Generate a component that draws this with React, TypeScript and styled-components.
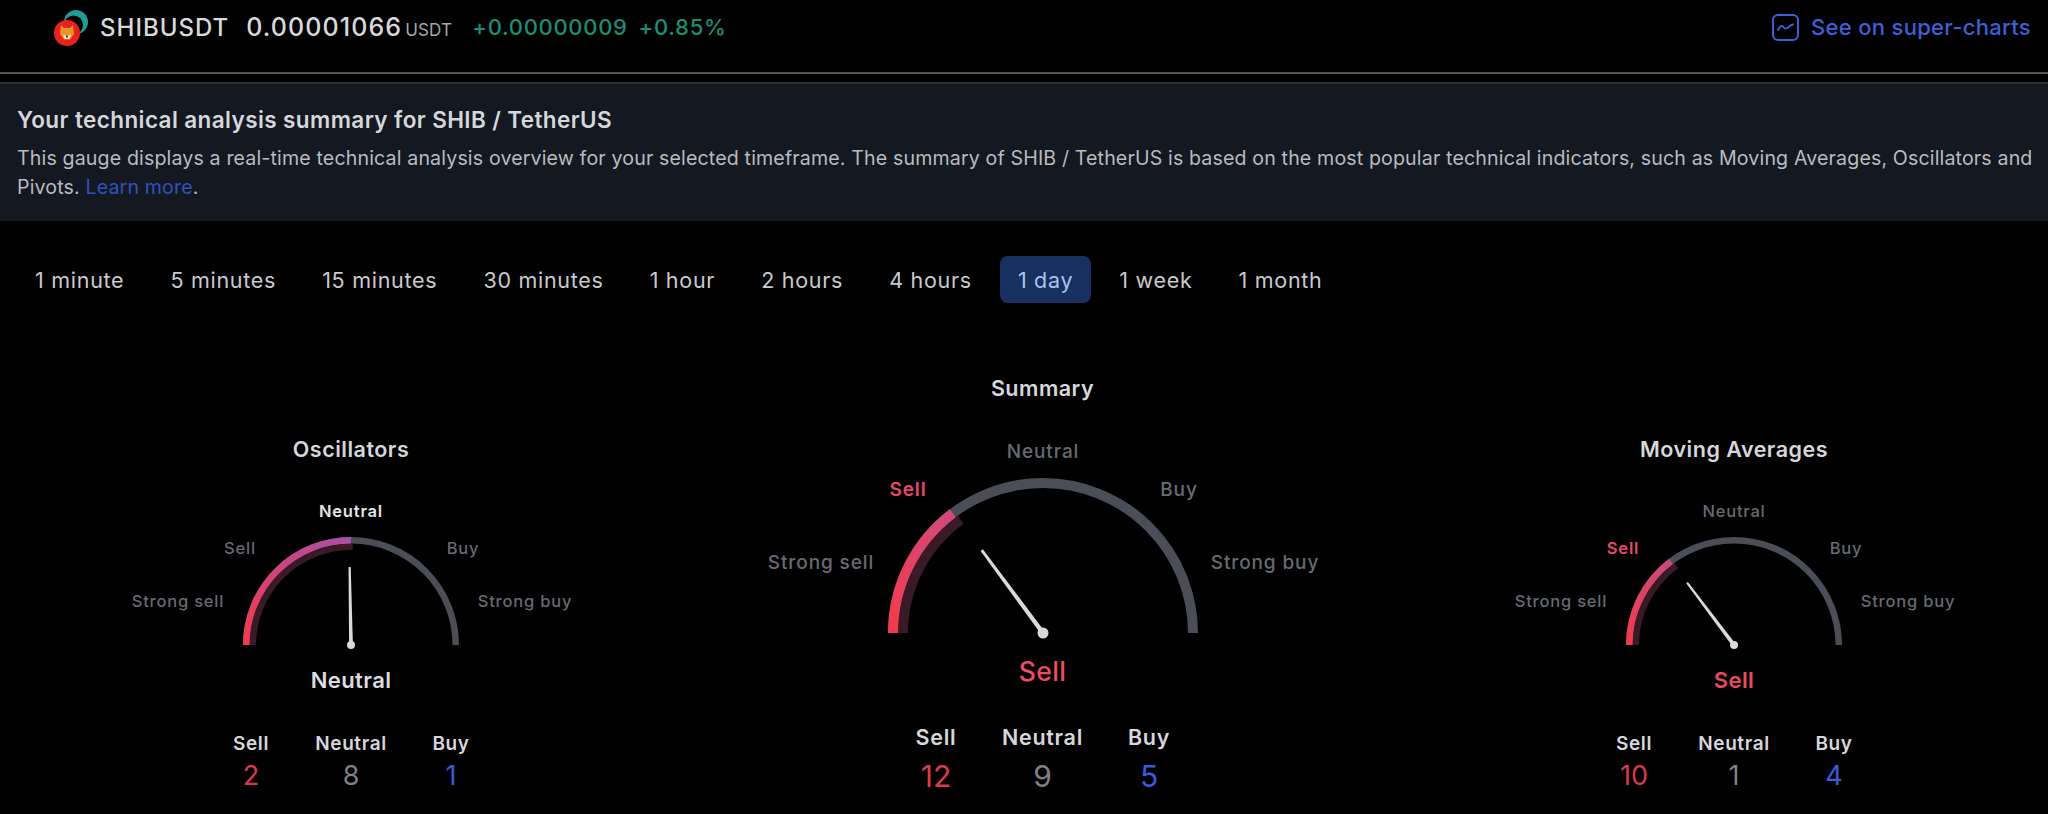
import React from "react";
import styled, { createGlobalStyle } from "styled-components";

const Global = createGlobalStyle`
  html, body { margin: 0; padding: 0; background: #000; }
  body { font-family: Inter, "Liberation Sans", sans-serif; }
`;

const Page = styled.div`
  width: 2048px;
  height: 814px;
  overflow: hidden;
  background: #000;
  color: #d6d7db;
`;

const Header = styled.header`
  height: 74px;
  box-sizing: border-box;
  padding: 10px 17px 0 53px;
  display: flex;
  justify-content: space-between;
  align-items: flex-start;
  border-bottom: 2px solid #55565c;
`;

const Ticker = styled.div`
  display: flex;
  align-items: center;
  height: 34px;
`;

const Symbol = styled.span`
  margin-left: -1px;
  font-size: 24px;
  font-weight: 500;
  color: #d8d9dc;
  letter-spacing: 1px;
`;

const Price = styled.span`
  margin-left: 17px;
  font-size: 25px;
  font-weight: 500;
  color: #d8d9dc;
  letter-spacing: 1.1px;
`;

const Unit = styled.span`
  margin-left: 3px;
  margin-top: 5px;
  font-size: 17px;
  color: #a7a8ad;
  letter-spacing: 0.2px;
`;

const Change = styled.span`
  margin-left: 20px;
  font-size: 22px;
  font-weight: 500;
  color: #1b8e75;
  letter-spacing: 0.7px;
  & + & { margin-left: 11px; }
`;

const ChartLink = styled.a`
  display: flex;
  align-items: center;
  gap: 12px;
  height: 34px;
  font-size: 22px;
  font-weight: 500;
  letter-spacing: 0.3px;
  color: #3c60d8;
`;

const Intro = styled.section`
  margin-top: 8px;
  height: 139px;
  box-sizing: border-box;
  padding: 22px 10px 0 17px;
  background: #131821;
  border-top: 2px solid #2b2e35;
`;

const IntroTitle = styled.h2`
  margin: 0;
  font-size: 22.5px;
  line-height: 28px;
  font-weight: 600;
  letter-spacing: 0.4px;
  color: #d6d7db;
`;

const IntroBody = styled.p`
  margin: 10px 0 0;
  font-size: 19.6px;
  line-height: 29px;
  letter-spacing: 0.14px;
  color: #b9bbc0;
`;

const LearnMore = styled.a`
  color: #2f53bd;
`;

const Tabs = styled.nav`
  margin-top: 35px;
  padding-left: 17px;
  display: flex;
  gap: 10px;
  height: 47px;
`;

const Tab = styled.div<{ $active?: boolean }>`
  padding: 0 18px;
  display: flex;
  align-items: center;
  border-radius: 8px;
  font-size: 21.5px;
  letter-spacing: 0.72px;
  background: ${(p) => (p.$active ? "#17305f" : "transparent")};
  color: ${(p) => (p.$active ? "#a9c3f0" : "#c9cace")};
`;

const Gauges = styled.div`
  margin-top: 71px;
  padding: 0 94px 0 131px;
  display: flex;
  justify-content: space-between;
  align-items: flex-start;
`;

const Column = styled.div<{ $big?: boolean }>`
  width: ${(p) => (p.$big ? 548 : 440)}px;
  margin-top: ${(p) => (p.$big ? 0 : 61)}px;
  display: flex;
  flex-direction: column;
  align-items: center;
`;

const ColumnTitle = styled.h3`
  margin: 0 0 33px;
  font-size: 21.5px;
  line-height: 28px;
  font-weight: 600;
  letter-spacing: 0.5px;
  color: #d6d7db;
  text-align: center;
`;

const DialSvg = styled.svg`
  display: block;
  overflow: visible;
`;

const DialLabel = styled.text<{ $color: string; $big?: boolean; $bold?: boolean }>`
  font-family: Inter, "Liberation Sans", sans-serif;
  font-size: ${(p) => (p.$big ? 19 : 16.5)}px;
  font-weight: ${(p) => (p.$bold ? 600 : 500)};
  fill: ${(p) => p.$color};
  letter-spacing: ${(p) => (p.$big ? 0.9 : 0.8)}px;
  text-anchor: middle;
  dominant-baseline: central;
`;

const Verdict = styled.div<{ $big?: boolean; $color: string }>`
  margin-top: 9px;
  font-size: ${(p) => (p.$big ? 26.5 : 22)}px;
  line-height: ${(p) => (p.$big ? 34 : 30)}px;
  font-weight: ${(p) => (p.$big ? 500 : 600)};
  letter-spacing: 0.4px;
  color: ${(p) => p.$color};
`;

const Stats = styled.div<{ $big?: boolean }>`
  margin-top: ${(p) => (p.$big ? 35 : 36)}px;
  display: grid;
  grid-template-columns: repeat(3, ${(p) => (p.$big ? 106.5 : 100)}px);
  justify-items: center;
`;

const Stat = styled.div`
  display: flex;
  flex-direction: column;
  align-items: center;
`;

const StatLabel = styled.div<{ $big?: boolean }>`
  font-size: ${(p) => (p.$big ? 21.5 : 19)}px;
  line-height: ${(p) => (p.$big ? 28 : 26)}px;
  font-weight: 600;
  letter-spacing: ${(p) => (p.$big ? 0.7 : 0.6)}px;
  color: #d6d7db;
`;

const StatValue = styled.div<{ $big?: boolean; $color: string }>`
  margin-top: ${(p) => (p.$big ? 5 : 1)}px;
  font-size: ${(p) => (p.$big ? 30 : 27)}px;
  line-height: ${(p) => (p.$big ? 40 : 36)}px;
  color: ${(p) => p.$color};
`;

const MUTED = "#686a74";

const ShibLogo = () => (
  <svg width="48" height="48" viewBox="0 0 48 48">
    <circle cx="23" cy="19" r="12" fill="#1f9d92" />
    <circle cx="20.5" cy="22" r="9.5" fill="#000" />
    <circle cx="14" cy="30" r="13" fill="#e8231f" />
    <path d="M8 22l3 3h6l3-3 1 9-4 5.5h-6l-4-5.5z" fill="#e8932b" />
    <path d="M10 31.5l4 1.5 4-1.5-1.5 4.5h-5z" fill="#f7e3c4" />
    <circle cx="14" cy="33.5" r="1" fill="#2a1a10" />
  </svg>
);

const ChartIcon = () => (
  <svg width="27" height="27" viewBox="0 0 27 27" fill="none" stroke="#3c60d8">
    <rect x="1" y="1" width="25" height="25" rx="5" strokeWidth="2" />
    <path d="M6 16c2-4 3.5-5 5-3.5s2.5 3 4.5 1.5 3-3 5.5-3.5" strokeWidth="1.8" strokeLinecap="round" />
  </svg>
);

type Config = {
  title: string;
  big?: boolean;
  angle: number;
  needle: number;
  end: string;
  active: string;
  verdict: string;
  verdictColor: string;
  stats: [number, number, number];
};

const polar = (cx: number, cy: number, r: number, deg: number) => {
  const a = (deg * Math.PI) / 180;
  return [cx - r * Math.cos(a), cy - r * Math.sin(a)];
};

const arc = (cx: number, cy: number, r: number, from: number, to: number) => {
  const [x1, y1] = polar(cx, cy, r, from);
  const [x2, y2] = polar(cx, cy, r, to);
  return `M${x1} ${y1}A${r} ${r} 0 0 1 ${x2} ${y2}`;
};

const Dial = ({ cfg, id }: { cfg: Config; id: string }) => {
  const big = !!cfg.big;
  const w = big ? 548 : 440;
  const h = big ? 210 : 160;
  const cx = w / 2;
  const cy = big ? 198 : 149;
  const R = big ? 155 : 108;
  const sw = big ? 10 : 6.5;
  const r1 = R - sw / 2;
  const r2 = R - sw * 1.5;
  const [gx, gy] = polar(cx, cy, r1, cfg.angle);
  const len = big ? 103 : 78;
  const [tx, ty] = polar(cx, cy, len, cfg.needle);
  const a = (cfg.needle * Math.PI) / 180;
  const nx = Math.sin(a);
  const ny = -Math.cos(a);
  const base = big ? 2.3 : 1.9;
  const tip = big ? 1.4 : 1.1;
  const needle = [
    [cx + nx * base, cy + ny * base],
    [cx - nx * base, cy - ny * base],
    [tx - nx * tip, ty - ny * tip],
    [tx + nx * tip, ty + ny * tip],
  ]
    .map((p) => p.join(","))
    .join(" ");
  const lab = big
    ? { top: 16, sx: cx - 135, sy: 54, ox: cx + 136, stx: cx - 222, sty: 127, otx: cx + 222 }
    : { top: 15, sx: cx - 111, sy: 52, ox: cx + 112, stx: cx - 173, sty: 105, otx: cx + 174 };
  const active = cfg.active;
  return (
    <DialSvg width={w} height={h} viewBox={`0 0 ${w} ${h}`}>
      <defs>
        <linearGradient id={id} gradientUnits="userSpaceOnUse" x1={cx - R} y1={cy} x2={gx} y2={gy}>
          <stop offset="0" stopColor="#f43a4b" />
          <stop offset="1" stopColor={cfg.end} />
        </linearGradient>
      </defs>
      <DialLabel $big={big} x={cx} y={lab.top} $color={active === "Neutral" ? "#e4e5e8" : MUTED} $bold={active === "Neutral"}>Neutral</DialLabel>
      <DialLabel $big={big} x={lab.sx} y={lab.sy} $color={active === "Sell" ? "#e8486a" : MUTED} $bold={active === "Sell"}>Sell</DialLabel>
      <DialLabel $big={big} x={lab.ox} y={lab.sy} $color={MUTED}>Buy</DialLabel>
      <DialLabel $big={big} x={lab.stx} y={lab.sty} $color={MUTED}>Strong sell</DialLabel>
      <DialLabel $big={big} x={lab.otx} y={lab.sty} $color={MUTED}>Strong buy</DialLabel>
      <path d={arc(cx, cy, r1, 0, 180)} fill="none" stroke="#4b4d59" strokeWidth={sw} />
      <path d={arc(cx, cy, r2, 0, cfg.angle + 1)} fill="none" stroke="#3b1a28" strokeWidth={sw} />
      <path d={arc(cx, cy, r1, 0, cfg.angle)} fill="none" stroke={`url(#${id})`} strokeWidth={sw} />
      <polygon points={needle} fill="#d9dadd" />
      <circle cx={cx} cy={cy} r={big ? 5.5 : 4} fill="#d9dadd" />
    </DialSvg>
  );
};

const gauges: Config[] = [
  { title: "Oscillators", angle: 90, needle: 89, end: "#a94fa8", active: "Neutral", verdict: "Neutral", verdictColor: "#dcdde0", stats: [2, 8, 1] },
  { title: "Summary", big: true, angle: 53, needle: 53.5, end: "#d04a7a", active: "Sell", verdict: "Sell", verdictColor: "#ee4c60", stats: [12, 9, 5] },
  { title: "Moving Averages", angle: 53, needle: 53, end: "#c94a78", active: "Sell", verdict: "Sell", verdictColor: "#e84a60", stats: [10, 1, 4] },
];

const tabs = ["1 minute", "5 minutes", "15 minutes", "30 minutes", "1 hour", "2 hours", "4 hours", "1 day", "1 week", "1 month"];

export default function App() {
  return (
    <Page>
      <Global />
      <Header>
        <Ticker>
          <ShibLogo />
          <Symbol>SHIBUSDT</Symbol>
          <Price>0.00001066</Price>
          <Unit>USDT</Unit>
          <Change>+0.00000009</Change>
          <Change>+0.85%</Change>
        </Ticker>
        <ChartLink>
          <ChartIcon />
          See on super-charts
        </ChartLink>
      </Header>
      <Intro>
        <IntroTitle>Your technical analysis summary for SHIB / TetherUS</IntroTitle>
        <IntroBody>
          This gauge displays a real-time technical analysis overview for your selected timeframe. The summary of SHIB / TetherUS is based on the most popular technical indicators, such as Moving Averages, Oscillators and Pivots. <LearnMore>Learn more</LearnMore>.
        </IntroBody>
      </Intro>
      <Tabs>
        {tabs.map((t) => (
          <Tab key={t} $active={t === "1 day"}>{t}</Tab>
        ))}
      </Tabs>
      <Gauges>
        {gauges.map((g, i) => (
          <Column key={g.title} $big={g.big}>
            <ColumnTitle>{g.title}</ColumnTitle>
            <Dial cfg={g} id={`grad${i}`} />
            <Verdict $big={g.big} $color={g.verdictColor}>{g.verdict}</Verdict>
            <Stats $big={g.big}>
              <Stat>
                <StatLabel $big={g.big}>Sell</StatLabel>
                <StatValue $big={g.big} $color="#dc3a4c">{g.stats[0]}</StatValue>
              </Stat>
              <Stat>
                <StatLabel $big={g.big}>Neutral</StatLabel>
                <StatValue $big={g.big} $color="#808188">{g.stats[1]}</StatValue>
              </Stat>
              <Stat>
                <StatLabel $big={g.big}>Buy</StatLabel>
                <StatValue $big={g.big} $color="#3a5cd8">{g.stats[2]}</StatValue>
              </Stat>
            </Stats>
          </Column>
        ))}
      </Gauges>
    </Page>
  );
}
